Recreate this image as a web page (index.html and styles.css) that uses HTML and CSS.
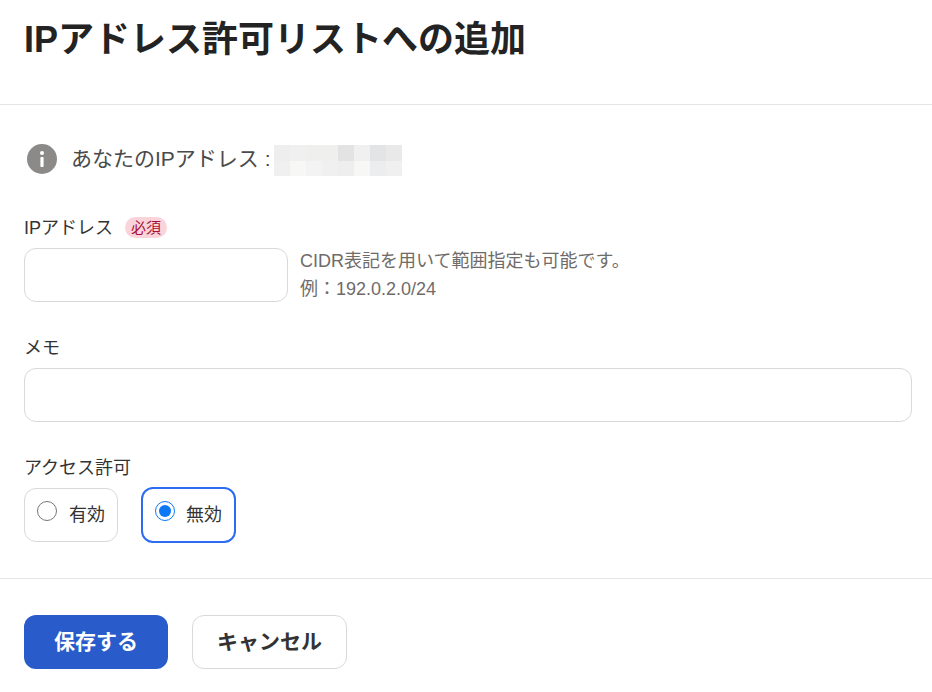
FILE: index.html
```html
<!DOCTYPE html>
<html lang="ja">
<head>
  <meta charset="UTF-8" />
  <title>IPアドレス許可リストへの追加</title>
  <link rel="stylesheet" href="styles.css">
</head>
<body>

  <header class="page-header">
    <h1>IPアドレス許可リストへの追加</h1>
  </header>

  <main class="form-body">
    <div class="your-ip">
      <svg class="info-icon" width="32" height="32" viewBox="0 0 32 32">
        <circle cx="16" cy="16" r="15" fill="#8c8a88"/>
        <circle cx="16" cy="10" r="2" fill="#fff"/>
        <rect x="14.4" y="14" width="3.2" height="10" rx="0.8" fill="#fff"/>
      </svg>
      <span class="your-ip-label">あなたのIPアドレス :</span>
      <div class="blur-box">
        <i class="c1"></i><i class="c2"></i><i class="c3"></i><i class="c3"></i><i class="c5"></i><i class="c2"></i><i class="c6"></i><i class="c4"></i>
        <i class="c2"></i><i class="c7"></i><i class="c8"></i><i class="c2"></i><i class="c1"></i><i class="c7"></i><i class="c9"></i><i class="c2"></i>
      </div>
    </div>

    <div class="field ip-field">
      <label class="field-label">IPアドレス <span class="required">必須</span></label>
      <div class="ip-row">
        <input class="text-input ip-input" type="text">
        <p class="hint">CIDR表記を用いて範囲指定も可能です。<br>例：192.0.2.0/24</p>
      </div>
    </div>

    <div class="field memo-field">
      <label class="field-label">メモ</label>
      <input class="text-input" type="text">
    </div>

    <div class="field access-field">
      <label class="field-label">アクセス許可</label>
      <div class="radio-row">
        <label class="radio-card"><input type="radio" name="access"><span>有効</span></label>
        <label class="radio-card selected"><input type="radio" name="access" checked><span>無効</span></label>
      </div>
    </div>
  </main>

  <footer class="page-footer">
    <button class="btn btn-primary" type="button">保存する</button>
    <button class="btn btn-cancel" type="button">キャンセル</button>
  </footer>

</body>
</html>
```

FILE: styles.css
```css
body {
  margin: 0;
  font-family: "Liberation Sans", "Noto Sans CJK JP", sans-serif;
  background: #fff;
  color: #333;
  overflow: hidden;
}

.page-header {
  height: 104px;
  border-bottom: 1px solid #e5e5e5;
  padding-left: 24px;
}

.page-header h1 {
  margin: 0;
  padding-top: 14px;
  font-size: 36px;
  line-height: 52px;
  font-weight: bold;
  color: #232323;
}

.form-body {
  padding: 38px 20px 0 24px;
  height: 474px;
  box-sizing: border-box;
  border-bottom: 1px solid #e5e5e5;
}

.your-ip {
  display: flex;
  align-items: center;
  height: 32px;
  color: #4a4a4a;
}

.info-icon {
  margin-left: 2px;
  margin-right: 13px;
}

.your-ip-label {
  font-size: 21px;
  line-height: 30px;
  white-space: nowrap;
}

.blur-box {
  display: grid;
  grid-template-columns: repeat(8, 16px);
  grid-template-rows: 16px 15px;
  margin: 3px 0 0 3px;
}

.c1 { background: #eeeeee; }
.c2 { background: #f0f0f0; }
.c3 { background: #efefed; }
.c4 { background: #e9e9e9; }
.c5 { background: #e3e3e3; }
.c6 { background: #e3e4e6; }
.c7 { background: #f7f7f6; }
.c8 { background: #f3f3f3; }
.c9 { background: #ecedef; }

.field-label {
  display: block;
  font-size: 18px;
  line-height: 26px;
  color: #333;
}

.ip-field {
  margin-top: 40px;
}

.required {
  display: inline-block;
  margin-left: 7px;
  padding: 0 6px;
  font-size: 15px;
  line-height: 21px;
  color: #a3123a;
  background: #fbd3da;
  border-radius: 11px;
  vertical-align: 1px;
}

.ip-row {
  display: flex;
  gap: 12px;
  margin-top: 7px;
}

.text-input {
  display: block;
  box-sizing: border-box;
  width: 100%;
  height: 54px;
  border: 1px solid #d9d9d9;
  border-radius: 12px;
  background: #fff;
}

.ip-input {
  width: 264px;
  flex: none;
}

.hint {
  margin: -1px 0 0;
  font-size: 18px;
  line-height: 28px;
  color: #6f6b68;
}

.memo-field {
  margin-top: 32px;
}

.memo-field .text-input {
  margin-top: 7px;
}

.access-field {
  margin-top: 33px;
}

.radio-row {
  display: flex;
  gap: 24px;
  margin-top: 7px;
}

.radio-card {
  box-sizing: border-box;
  display: flex;
  height: 54px;
  padding: 12px 12px 0;
  border: 1px solid #d9d9d9;
  border-radius: 12px;
  font-size: 18px;
}

.radio-card input {
  width: 20px;
  height: 20px;
  margin: 0;
  accent-color: #0b78f5;
}

.radio-card span {
  margin-left: 12px;
  line-height: 28px;
}

.radio-card.selected {
  border: 2px solid #2c6cf0;
  padding: 12px 12px 0;
  height: 56px;
  margin: -1px 0 0 -1px;
}

.selected span {
  margin-left: 11px;
}

.page-footer {
  display: flex;
  gap: 24px;
  padding: 36px 0 0 24px;
}

.btn {
  height: 54px;
  padding-bottom: 6px;
  border-radius: 12px;
  font-family: inherit;
  font-size: 21px;
  font-weight: bold;
}

.btn-primary {
  width: 144px;
  border: none;
  background: #2a5bca;
  color: #fff;
}

.btn-cancel {
  width: 155px;
  border: 1px solid #d9d9d9;
  background: #fff;
  color: #333;
}
```
